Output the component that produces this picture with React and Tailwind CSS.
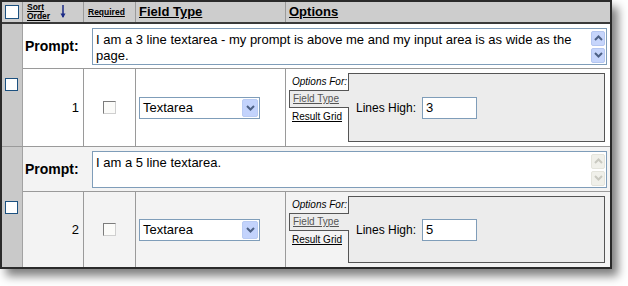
import React from 'react';

// ── Small drawn pieces ─────────────────────────────────────────────────────────
const Chevron = ({ up = false, color = '#4d6185' }) => (
  <svg width="9" height="6" viewBox="0 0 9 6">
    <path
      d={up ? 'M1 5 L4.5 1.5 L8 5' : 'M1 1 L4.5 4.5 L8 1'}
      fill="none"
      stroke={color}
      strokeWidth="2"
    />
  </svg>
);

const BlueCheck = ({ size = 'w-[13px] h-[13px]' }) => (
  <div className={`${size} bg-white border border-[#1c5180]`} />
);

const GreyCheck = () => (
  <div className="w-[13px] h-[13px] bg-[#fbfbf9] border border-[#cfcfcf] border-t-[#7c7c7c] border-l-[#7c7c7c]" />
);

const ScrollButtons = ({ enabled }) => (
  <div className="flex flex-col gap-[2px] pt-[2px] pr-[1px]">
    {[true, false].map((up) => (
      <div
        key={String(up)}
        className={`w-[14px] h-[15px] flex items-center justify-center rounded-[2px] border ${
          enabled
            ? 'bg-[#c6d5fb] border-[#b4c6f0]'
            : 'bg-[#f0f0ea] border-[#e4e4dc]'
        }`}
      >
        <Chevron up={up} color={enabled ? '#4d6185' : '#c9c9c0'} />
      </div>
    ))}
  </div>
);

const TextBox = ({ text, enabled }) => (
  <div className="flex w-[515px] h-[37px] bg-white border border-[#7f9db9]">
    <div className="flex-1 px-[3px] pt-[3px] text-[13px] leading-[16px] text-black">
      {text}
    </div>
    <ScrollButtons enabled={enabled} />
  </div>
);

const Select = () => (
  <div className="flex items-center w-[121px] h-[22px] bg-white border border-[#7f9db9]">
    <span className="flex-1 pl-[3px] text-[13px] text-black">Textarea</span>
    <div className="w-[16px] h-[18px] mr-[1px] flex items-center justify-center rounded-[2px] bg-[#c3d3fc] border border-[#b9cbf3]">
      <Chevron />
    </div>
  </div>
);

const Options = ({ lines }) => (
  <div className="flex flex-1 pl-[3px] pr-[5px] py-[4px]">
    {/* tab strip */}
    <div className="flex flex-col w-[60px] -mr-px relative z-10">
      <div className="h-[17px] pl-[3px] pt-[2px] text-[10px] italic leading-[13px] text-black">
        Options For:
      </div>
      <div className="h-[18px] pl-[3px] bg-[#ececec] border border-r-0 border-[#555] text-[10px] leading-[15px] text-[#555] underline">
        Field Type
      </div>
      <div className="pl-[3px] pt-[2px] text-[10px] leading-[13px] text-black underline">
        Result Grid
      </div>
    </div>
    {/* options panel */}
    <div className="flex flex-1 items-center gap-[6px] pl-[7px] bg-[#ececec] border border-[#555]">
      <span className="text-[12px] text-black">Lines High:</span>
      <div className="w-[55px] h-[22px] pl-[3px] bg-white border border-[#7f9db9] text-[13px] leading-[20px] text-black">
        {lines}
      </div>
    </div>
  </div>
);

// ── One record: prompt row + data row ──────────────────────────────────────────
const Record = ({ order, prompt, lines, bg, last }) => (
  <div className={`flex ${last ? 'flex-1' : 'h-[123px] border-b border-[#9a9a9a]'} ${bg}`}>
    <div className="w-[21px] flex flex-col bg-[#c9c9c9] border-r border-[#a2a2a2]">
      <div className="h-[45px]" />
      <div className="pl-[3px] pt-[9px]">
        <BlueCheck />
      </div>
    </div>
    <div className="flex flex-col flex-1">
      <div className="h-[45px] flex items-center pl-[2px] border-b border-[#9a9a9a]">
        <span className="w-[67px] text-[14px] font-bold text-black">Prompt:</span>
        <TextBox text={prompt} enabled={order === 1} />
      </div>
      <div className="flex flex-1">
        <div className="w-[61px] flex items-center justify-end pr-[4px] border-r border-[#9a9a9a] text-[13px] text-black">
          {order}
        </div>
        <div className="w-[52px] flex items-center justify-center pr-[1px] border-r border-[#9a9a9a]">
          <GreyCheck />
        </div>
        <div className="w-[150px] flex items-center pl-[3px] border-r border-[#9a9a9a]">
          <Select />
        </div>
        <Options lines={lines} />
      </div>
    </div>
  </div>
);

export default function App() {
  return (
    <div className="w-[628px] h-[286px] bg-white font-['Liberation_Sans',Arial,sans-serif]">
      <div className="w-[612px] h-[269px] flex flex-col bg-white border-2 border-[#2a2a2a] shadow-[6px_7px_9px_rgba(0,0,0,0.5)]">
        {/* ── Header ── */}
        <div className="h-[22px] flex bg-[#cdcdcd] border-b-2 border-[#3a3a3a] text-black">
          <div className="w-[21px] flex items-center pl-[3px] border-r border-[#9a9a9a]">
            <BlueCheck size="w-[14px] h-[14px]" />
          </div>
          <div className="w-[61px] flex items-center gap-[10px] pl-[4px] border-r border-[#9a9a9a]">
            <div className="flex flex-col text-[8.5px] font-bold leading-[9px] underline">
              <span>Sort</span>
              <span>Order</span>
            </div>
            <svg width="6" height="14" viewBox="0 0 6 14">
              <path d="M3 0 V12" stroke="#1b2a86" strokeWidth="1.5" />
              <path d="M0.5 8.5 L3 13 L5.5 8.5 Z" fill="#1b2a86" />
            </svg>
          </div>
          <div className="w-[52px] flex items-center pl-[4px] border-r border-[#9a9a9a] text-[8.5px] font-bold underline">
            Required
          </div>
          <div className="w-[150px] flex items-center pl-[3px] border-r border-[#9a9a9a] text-[13px] font-bold underline">
            Field Type
          </div>
          <div className="flex-1 flex items-center pl-[3px] text-[13px] font-bold underline">
            Options
          </div>
        </div>

        <Record
          order={1}
          prompt="I am a 3 line textarea - my prompt is above me and my input area is as wide as the page."
          lines="3"
          bg="bg-white"
        />
        <Record
          order={2}
          prompt="I am a 5 line textarea."
          lines="5"
          bg="bg-[#f3f3f3]"
          last
        />
      </div>
    </div>
  );
}
